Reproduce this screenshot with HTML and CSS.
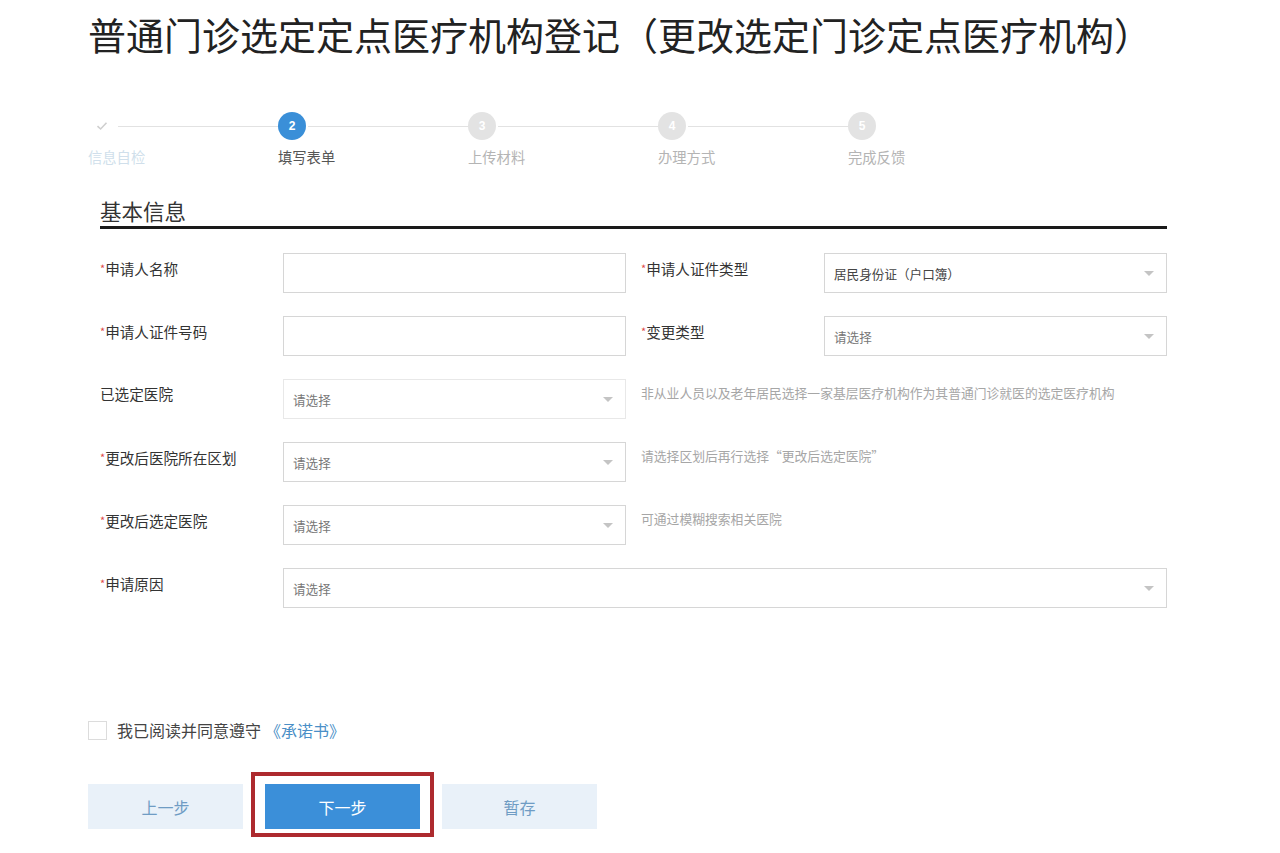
FILE: index.html
```html
<!DOCTYPE html>
<html lang="zh-CN">
<head>
<meta charset="utf-8">
<title>普通门诊选定定点医疗机构登记</title>
<link rel="stylesheet" href="styles.css">
</head>
<body>
<div class="page">
  <h1 class="title">普通门诊选定定点医疗机构登记（更改选定门诊定点医疗机构）</h1>

  <div class="steps">
    <div class="step done">
      <div class="step-head">
        <span class="dot"><svg width="12" height="10" viewBox="0 0 12 10"><path d="M1.5 5.2 L4.6 8 L10.5 1.8" fill="none" stroke="#cfcfcf" stroke-width="1.6"/></svg></span>
        <span class="line"></span>
      </div>
      <div class="step-label">信息自检</div>
    </div>
    <div class="step active">
      <div class="step-head"><span class="dot">2</span><span class="line"></span></div>
      <div class="step-label">填写表单</div>
    </div>
    <div class="step">
      <div class="step-head"><span class="dot">3</span><span class="line"></span></div>
      <div class="step-label">上传材料</div>
    </div>
    <div class="step">
      <div class="step-head"><span class="dot">4</span><span class="line"></span></div>
      <div class="step-label">办理方式</div>
    </div>
    <div class="step last">
      <div class="step-head"><span class="dot">5</span></div>
      <div class="step-label">完成反馈</div>
    </div>
  </div>

  <div class="section">
    <h2 class="section-title">基本信息</h2>

    <div class="form">
      <div class="row">
        <div class="half">
          <label class="label"><i>*</i>申请人名称</label>
          <div class="input"></div>
        </div>
        <div class="half">
          <label class="label"><i>*</i>申请人证件类型</label>
          <div class="input select"><span class="value">居民身份证（户口簿）</span><span class="caret"></span></div>
        </div>
      </div>

      <div class="row">
        <div class="half">
          <label class="label"><i>*</i>申请人证件号码</label>
          <div class="input"></div>
        </div>
        <div class="half">
          <label class="label"><i>*</i>变更类型</label>
          <div class="input select"><span class="ph">请选择</span><span class="caret"></span></div>
        </div>
      </div>

      <div class="row">
        <div class="half">
          <label class="label">已选定医院</label>
          <div class="input select disabled"><span class="ph">请选择</span><span class="caret"></span></div>
        </div>
        <div class="hint">非从业人员以及老年居民选择一家基层医疗机构作为其普通门诊就医的选定医疗机构</div>
      </div>

      <div class="row">
        <div class="half">
          <label class="label"><i>*</i>更改后医院所在区划</label>
          <div class="input select"><span class="ph">请选择</span><span class="caret"></span></div>
        </div>
        <div class="hint">请选择区划后再行选择“更改后选定医院”</div>
      </div>

      <div class="row">
        <div class="half">
          <label class="label"><i>*</i>更改后选定医院</label>
          <div class="input select"><span class="ph">请选择</span><span class="caret"></span></div>
        </div>
        <div class="hint">可通过模糊搜索相关医院</div>
      </div>

      <div class="row row-full">
        <label class="label"><i>*</i>申请原因</label>
        <div class="input select wide"><span class="ph">请选择</span><span class="caret"></span></div>
      </div>
    </div>
  </div>

  <div class="agree">
    <span class="checkbox"></span>
    <span class="agree-text">我已阅读并同意遵守</span>
    <a class="agree-link">《承诺书》</a>
  </div>

  <div class="buttons">
    <button class="btn btn-light">上一步</button>
    <span class="highlight"><button class="btn btn-primary">下一步</button></span>
    <button class="btn btn-light">暂存</button>
  </div>
</div>
</body>
</html>
```

FILE: styles.css
```css
* { box-sizing: border-box; }

html, body {
  margin: 0;
  padding: 0;
  background: #ffffff;
}

body {
  font-family: "Noto Sans CJK SC", "Noto Sans", sans-serif;
  color: #333;
  min-height: 853px;
}

.page {
  padding-left: 88px;
  width: 1280px;
}

.title {
  margin: 0;
  padding-top: 9px;
  font-size: 38px;
  line-height: 50px;
  font-weight: 400;
  color: #222;
  letter-spacing: 0;
  white-space: nowrap;
}

/* Steps */
.steps {
  display: flex;
  margin-top: 53px;
}

.step {
  width: 190px;
  display: flex;
  flex-direction: column;
}

.step.last { width: 120px; }

.step-head {
  display: flex;
  align-items: center;
  height: 28px;
}

.dot {
  width: 28px;
  height: 28px;
  flex: none;
  border-radius: 50%;
  background: #e3e3e3;
  color: #fff;
  font-size: 12px;
  font-weight: 700;
  display: flex;
  align-items: center;
  justify-content: center;
  font-family: "Liberation Sans", Arial, sans-serif;
}

.step.done .dot {
  background: transparent;
}

.step.active .dot {
  background: #3a8fd8;
}

.line {
  flex: 1;
  height: 1px;
  background: #e2e2e2;
  margin-left: 2px;
}

.step-label {
  margin-top: 7px;
  font-size: 14.3px;
  line-height: 20px;
  color: #b4b4b4;
  white-space: nowrap;
}

.step.done .step-label { color: #d0dfeb; }
.step.active .step-label { color: #555; }

/* Section */
.section {
  margin-left: 12px;
  width: 1067px;
}

.section-title {
  margin: 30px 0 0 0;
  font-size: 21.5px;
  line-height: 28px;
  font-weight: 400;
  color: #333;
  padding-bottom: 1px;
  border-bottom: 3px solid #1a1a1a;
}

.form {
  margin-top: 24px;
  display: flex;
  flex-direction: column;
  gap: 23px;
}

.row {
  display: flex;
  gap: 15px;
  align-items: flex-start;
}

.row.row-full {
  gap: 0;
}

.half {
  display: flex;
  width: 526px;
  flex: none;
}

.label {
  width: 183px;
  flex: none;
  padding-top: 5px;
  font-size: 14.6px;
  line-height: 20px;
  color: #333;
  white-space: nowrap;
}

.label i {
  font-style: normal;
  color: #e04a4a;
  font-size: 11px;
  vertical-align: 2px;
}

.input {
  width: 343px;
  height: 40px;
  flex: none;
  border: 1px solid #d6d6d6;
  background: #fff;
  display: flex;
  align-items: center;
  padding: 0 12px 0 9px;
  font-size: 12.6px;
  color: #444;
}

.input.wide {
  width: 884px;
}

.input.disabled {
  border-color: #e8e8e8;
}

.select .value,
.select .ph {
  flex: 1;
  white-space: nowrap;
  padding-top: 1px;
}

.select .ph { color: #777; }

.caret {
  width: 0;
  height: 0;
  border-left: 5px solid transparent;
  border-right: 5px solid transparent;
  border-top: 5px solid #c4c4c4;
  flex: none;
}

.hint {
  padding-top: 4px;
  font-size: 12.8px;
  line-height: 20px;
  color: #a6a6a6;
  white-space: nowrap;
}

/* Agreement */
.agree {
  margin-top: 112px;
  display: flex;
  align-items: center;
  height: 20px;
}

.checkbox {
  width: 19px;
  height: 19px;
  border: 1px solid #dcdcdc;
  background: #fff;
  flex: none;
}

.agree-text {
  margin-left: 10px;
  font-size: 16px;
  line-height: 20px;
  color: #444;
}

.agree-link {
  margin-left: 4px;
  font-size: 16px;
  line-height: 20px;
  color: #4a8fc7;
}

/* Buttons */
.buttons {
  margin-top: 44px;
  display: flex;
  gap: 22px;
  align-items: flex-start;
}

.btn {
  width: 155px;
  height: 45px;
  border: none;
  margin: 0;
  padding: 0;
  font-family: "Noto Sans CJK SC", sans-serif;
  font-size: 16px;
  cursor: pointer;
  display: block;
}

.btn-light {
  background: #e9f1f9;
  color: #6f9cc4;
}

.btn-primary {
  background: #3b8fd9;
  color: #fff;
}

.highlight {
  position: relative;
  display: block;
  height: 45px;
}

.highlight::after {
  content: "";
  position: absolute;
  left: -14px;
  right: -14px;
  top: -12px;
  bottom: -8px;
  border: 4px solid #ad2a2e;
  pointer-events: none;
}
```
